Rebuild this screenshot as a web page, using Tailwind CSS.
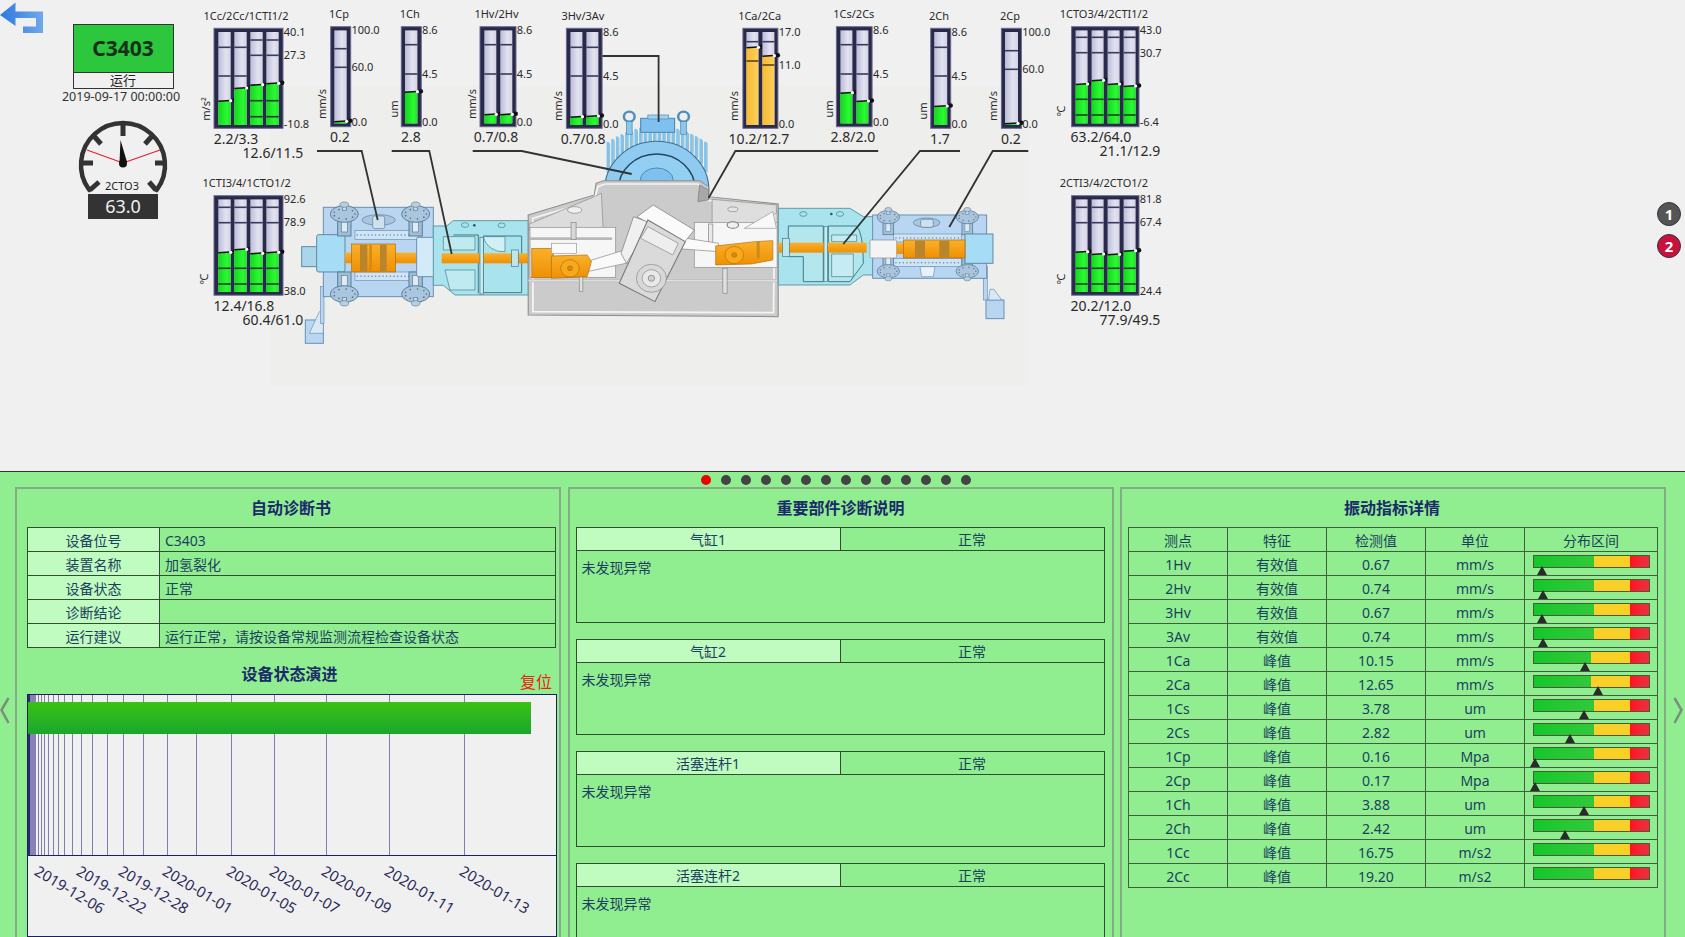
<!DOCTYPE html>
<html lang="zh-CN">
<head>
<meta charset="UTF-8" />
<title>C3403</title>
<script src="https://cdn.jsdelivr.net/npm/@tailwindcss/browser@4"></script>
</head>
<body class="w-[1685px] h-[937px] overflow-hidden flex flex-col bg-[#f0f0f0] text-[#1c3f5f] font-['Noto_Sans','Noto_Sans_CJK_SC',sans-serif]">

  <!-- top: machine overview -->
  <section class="relative h-[471px] shrink-0">
    <svg id="canvas" class="absolute left-0 top-0" width="1685" height="471"></svg>

    <svg class="absolute left-0 top-0" width="44" height="36" viewBox="0 0 44 36">
      <defs><linearGradient id="backblue" x1="0" x2="1"><stop offset="0" stop-color="#2f78dc"/><stop offset="1" stop-color="#6fa8ec"/></linearGradient></defs>
      <path d="M0 15 L15.5 2.5 V11.5 H43 V33 H23 V26.5 H36 V18 H15.5 V26 Z" fill="url(#backblue)"/>
    </svg>

    <!-- status column -->
    <div class="relative ml-[62px] pt-[24px] w-[122px] flex flex-col items-center">
      <div class="w-[101px] h-[65px] border border-[#333] flex flex-col text-[#222]">
        <div class="h-[48px] bg-[#2cc73c] border-b border-[#333] flex items-center justify-center text-[21px] font-bold text-[#16301c]">C3403</div>
        <div class="flex-1 flex items-center justify-center text-[13px] leading-none">运行</div>
      </div>
      <div class="-ml-[4px] text-[12.5px] leading-[16px] whitespace-nowrap text-[#333]">2019-09-17 00:00:00</div>
      <svg class="mt-[13px]" width="100" height="82" viewBox="73 118 100 82">
        <path d="M89.3 190 A42 42 0 1 1 156.7 190" fill="none" stroke="#333" stroke-width="4.5" stroke-linecap="round"/>
        <g stroke="#333" stroke-width="5">
          <line x1="123" y1="125" x2="123" y2="136"/>
          <line x1="93" y1="135" x2="101" y2="144"/>
          <line x1="153" y1="135" x2="145" y2="144"/>
          <line x1="81" y1="163" x2="93" y2="163"/>
          <line x1="155" y1="163" x2="165" y2="163"/>
          <line x1="90" y1="190" x2="99" y2="182"/>
          <line x1="156" y1="190" x2="149" y2="182"/>
        </g>
        <line x1="123" y1="163" x2="87" y2="150" stroke="#e02030" stroke-width="1.2"/>
        <line x1="123" y1="163" x2="160" y2="150" stroke="#e02030" stroke-width="1.2"/>
        <path d="M120.5 140 L127 162 L119.5 163 Z" fill="#111"/>
        <circle cx="123" cy="163.5" r="4" fill="#111"/>
        <text x="122" y="185" text-anchor="middle" dominant-baseline="central" font-size="11" fill="#222">2CTO3</text>
      </svg>
      <div class="w-[70px] h-[25px] -mt-[6px] bg-[#333] text-[#f0f0f0] text-[18px] leading-[25px] text-center">63.0</div>
    </div>

    <div class="absolute left-[1657px] top-[202px] flex flex-col gap-[8px] text-white text-[15px] font-bold">
      <div class="w-[24px] h-[24px] rounded-full bg-[#555] border border-[#334] flex items-center justify-center">1</div>
      <div class="w-[24px] h-[24px] rounded-full bg-[#c8123c] border border-[#334] flex items-center justify-center">2</div>
    </div>
  </section>

  <!-- bottom: diagnosis panels -->
  <section class="relative flex-1 min-h-0 bg-[#90ee90] border-t border-[#333] overflow-hidden">
    <div class="h-[15px] ml-[700.5px] flex items-center gap-[10px]">
      <span class="w-[10px] h-[10px] rounded-full bg-[#f00000]"></span>
      <span class="w-[10px] h-[10px] rounded-full bg-[#444]"></span>
      <span class="w-[10px] h-[10px] rounded-full bg-[#444]"></span>
      <span class="w-[10px] h-[10px] rounded-full bg-[#444]"></span>
      <span class="w-[10px] h-[10px] rounded-full bg-[#444]"></span>
      <span class="w-[10px] h-[10px] rounded-full bg-[#444]"></span>
      <span class="w-[10px] h-[10px] rounded-full bg-[#444]"></span>
      <span class="w-[10px] h-[10px] rounded-full bg-[#444]"></span>
      <span class="w-[10px] h-[10px] rounded-full bg-[#444]"></span>
      <span class="w-[10px] h-[10px] rounded-full bg-[#444]"></span>
      <span class="w-[10px] h-[10px] rounded-full bg-[#444]"></span>
      <span class="w-[10px] h-[10px] rounded-full bg-[#444]"></span>
      <span class="w-[10px] h-[10px] rounded-full bg-[#444]"></span>
      <span class="w-[10px] h-[10px] rounded-full bg-[#444]"></span>
    </div>

    <div class="flex gap-[6.5px] pl-[15px]">
      <!-- panel 1 -->
      <div class="w-[546px] h-[480px] shrink-0 border-2 border-[#84ad84] pl-[10px]">
        <h2 class="h-[38px] flex items-center justify-center text-[16px] font-bold text-[#1a2a6a] pr-[4px]">自动诊断书</h2>
        <table class="w-[529px] table-fixed border-collapse text-[14px]">
          <colgroup><col class="w-[132px]"/><col/></colgroup>
          <tbody>
            <tr class="h-6"><td class="border border-[#2f4f2f] bg-[#c0fbc0] text-center p-0 pt-[2px]">设备位号</td><td class="border border-[#2f4f2f] p-0 pt-[2px] pl-[5px]">C3403</td></tr>
            <tr class="h-6"><td class="border border-[#2f4f2f] bg-[#c0fbc0] text-center p-0 pt-[2px]">装置名称</td><td class="border border-[#2f4f2f] p-0 pt-[2px] pl-[5px]">加氢裂化</td></tr>
            <tr class="h-6"><td class="border border-[#2f4f2f] bg-[#c0fbc0] text-center p-0 pt-[2px]">设备状态</td><td class="border border-[#2f4f2f] p-0 pt-[2px] pl-[5px]">正常</td></tr>
            <tr class="h-6"><td class="border border-[#2f4f2f] bg-[#c0fbc0] text-center p-0 pt-[2px]">诊断结论</td><td class="border border-[#2f4f2f] p-0 pt-[2px] pl-[5px]"></td></tr>
            <tr class="h-6"><td class="border border-[#2f4f2f] bg-[#c0fbc0] text-center p-0 pt-[2px]">运行建议</td><td class="border border-[#2f4f2f] p-0 pt-[2px] pl-[5px]">运行正常，请按设备常规监测流程检查设备状态</td></tr>
          </tbody>
        </table>
        <div class="relative h-[46px] w-[529px] flex items-center justify-center pt-[6px] text-[16px] font-bold text-[#1a2a6a] pr-[4px]">
          设备状态演进
          <span class="absolute right-[4px] bottom-[0px] text-[16px] font-normal text-[#f02010]">复位</span>
        </div>
        <div id="chart" class="relative w-[530px] h-[243px] border border-[#1a2060] bg-[#f0f0f0] overflow-hidden text-[#2a2a5a] text-[15px]">
          <div class="absolute left-0 top-0 w-[8px] h-[160px] bg-[#8a80b8] border-l-2 border-[#2a2a70]"></div>
          <div id="chart-lines"></div>
          <div class="absolute left-0 top-[7px] w-[503px] h-[32px] bg-gradient-to-b from-[#3ac20e] to-[#19a72c]"></div>
          <div class="absolute left-0 right-0 top-[160px] h-px bg-[#1a2060]"></div>
          <div id="chart-labels"></div>
        </div>
      </div>

      <!-- panel 2 -->
      <div id="parts" class="w-[546px] h-[480px] shrink-0 border-2 border-[#84ad84] pl-[6px]">
        <h2 class="h-[38px] flex items-center justify-center text-[16px] font-bold text-[#1a2a6a] pr-[6px]">重要部件诊断说明</h2>
      </div>

      <!-- panel 3 -->
      <div class="w-[546px] h-[480px] shrink-0 border-2 border-[#84ad84] pl-[6px]">
        <h2 class="h-[38px] flex items-center justify-center text-[16px] font-bold text-[#1a2a6a] pr-[8px]">振动指标详情</h2>
        <table class="w-[530px] table-fixed border-collapse text-[14px] text-center">
          <colgroup><col class="w-[99px]"/><col class="w-[99px]"/><col class="w-[99px]"/><col class="w-[99px]"/><col/></colgroup>
          <thead>
            <tr class="h-6 font-normal">
              <td class="border border-[#3f5f3f] p-0 pt-[2px]">测点</td>
              <td class="border border-[#3f5f3f] p-0 pt-[2px]">特征</td>
              <td class="border border-[#3f5f3f] p-0 pt-[2px]">检测值</td>
              <td class="border border-[#3f5f3f] p-0 pt-[2px]">单位</td>
              <td class="border border-[#3f5f3f] p-0 pt-[2px]">分布区间</td>
            </tr>
          </thead>
          <tbody id="vib"></tbody>
        </table>
      </div>
    </div>

    <svg class="absolute left-0 top-[225px]" width="10" height="28"><polyline points="8.5,1 1.5,13 8.5,26" fill="none" stroke="#7a8f7a" stroke-width="2.5"/></svg>
    <svg class="absolute left-[1673px] top-[225px]" width="10" height="28"><polyline points="1.5,1 8.5,13 1.5,26" fill="none" stroke="#7a8f7a" stroke-width="2.5"/></svg>
  </section>

<script>
  // bottom panels
  const parts = ['气缸1', '气缸2', '活塞连杆1', '活塞连杆2'];
  document.getElementById('parts').insertAdjacentHTML('beforeend', parts.map(name => `
    <div class="w-[529px] h-[96px] mb-[16px] border border-[#2f4f2f] text-[14px]">
      <div class="h-[23px] flex border-b border-[#2f4f2f] text-center leading-[24px]">
        <div class="w-[264px] bg-[#c0fbc0] border-r border-[#2f4f2f]">${name}</div>
        <div class="flex-1">正常</div>
      </div>
      <div class="pl-[5px] pt-[7px] leading-[20px]">未发现异常</div>
    </div>`).join(''));

  const vib = [
    ['1Hv', '有效值', '0.67', 'mm/s', 52, 9.2],
    ['2Hv', '有效值', '0.74', 'mm/s', 52, 9.9],
    ['3Hv', '有效值', '0.67', 'mm/s', 52, 8.8],
    ['3Av', '有效值', '0.74', 'mm/s', 52, 9.9],
    ['1Ca', '峰值', '10.15', 'mm/s', 49.5, 52],
    ['2Ca', '峰值', '12.65', 'mm/s', 49.5, 64.9],
    ['1Cs', '峰值', '3.78', 'um', 52, 50.6],
    ['2Cs', '峰值', '2.82', 'um', 52, 37.4],
    ['1Cp', '峰值', '0.16', 'Mpa', 52, 1.8],
    ['2Cp', '峰值', '0.17', 'Mpa', 52, 1.8],
    ['1Ch', '峰值', '3.88', 'um', 52, 51],
    ['2Ch', '峰值', '2.42', 'um', 52, 32.3],
    ['1Cc', '峰值', '16.75', 'm/s2', 52, null],
    ['2Cc', '峰值', '19.20', 'm/s2', 52, null],
  ];
  document.getElementById('vib').innerHTML = vib.map(r => `
    <tr class="h-6">
      <td class="border border-[#3f5f3f] p-0 pt-[2px]">${r[0]}</td>
      <td class="border border-[#3f5f3f] p-0 pt-[2px]">${r[1]}</td>
      <td class="border border-[#3f5f3f] p-0 pt-[2px]">${r[2]}</td>
      <td class="border border-[#3f5f3f] p-0 pt-[2px]">${r[3]}</td>
      <td class="border border-[#3f5f3f] p-0">
        <div class="relative w-[117px] h-[23px] ml-[8px]">
          <div class="absolute left-0 top-[3px] w-[117px] h-[13px] border border-[#4a5a3a] flex">
            <div class="bg-gradient-to-r from-[#12c82a] to-[#30c83a]" style="width:${r[4]}%"></div>
            <div class="flex-1 bg-[#f8d028]"></div>
            <div class="w-[19px] bg-gradient-to-r from-[#ff1020] to-[#e83040]"></div>
          </div>
          ${r[5] === null ? '' : `<div class="absolute top-[14px] w-0 h-0 border-l-[5px] border-r-[5px] border-b-[9px] border-l-transparent border-r-transparent border-b-[#2a2a2a]" style="left:${r[5] - 5}px"></div>`}
        </div>
      </td>
    </tr>`).join('');

  // status history chart
  const lines = [10, 12.7, 15.6, 20, 25.1, 30.2, 36, 44, 53.1, 64, 78.5, 95.2, 115.2, 139.2, 168, 203.2, 246.2, 298.2, 361.1, 436.3];
  document.getElementById('chart-lines').innerHTML = lines.map(x =>
    `<div class="absolute top-0 w-px h-[160px] bg-[#7f7fae]" style="left:${x}px"></div>`).join('');
  const dates = [['2019-12-06', 12], ['2019-12-22', 54], ['2019-12-28', 96], ['2020-01-01', 140], ['2020-01-05', 204], ['2020-01-07', 247], ['2020-01-09', 299], ['2020-01-11', 362], ['2020-01-13', 437]];
  document.getElementById('chart-labels').innerHTML = dates.map(d =>
    `<span class="absolute top-[168px] leading-none whitespace-nowrap origin-top-left rotate-[31deg]" style="left:${d[1]}px">${d[0]}</span>`).join('');

  // machine drawing + gauges are drawn on one svg canvas
  const TXT = 'fill="#2a2a2a" dominant-baseline="central"';

  function valve(cx, cy, down, k = 1) {
    const s = down ? -1 : 1;
    let bolts = '';
    for (let a = 0; a < 360; a += 40) {
      const r = a * Math.PI / 180;
      bolts += `<circle cx="${cx + Math.cos(r) * 32}" cy="${cy + 14 * s + Math.sin(r) * 15}" r="2.5" fill="#4f7088"/>`;
    }
    return `<g transform="translate(${cx} ${cy}) scale(${k}) translate(${-cx} ${-cy})">
      <rect x="${cx - 20}" y="${down ? cy - 80 : cy + 14}" width="40" height="66" fill="#9fbfd8" stroke="#5a7d98" stroke-width="3"/>
      <rect x="${cx - 9}" y="${down ? cy - 70 : cy + 30}" width="18" height="38" fill="#dfeaf3" stroke="#5a7d98" stroke-width="2"/>
      <ellipse cx="${cx}" cy="${cy + 14 * s}" rx="42" ry="25" fill="#a9c6de" stroke="#5a7d98" stroke-width="3"/>${bolts}
      <rect x="${cx - 6}" y="${down ? cy - 4 : cy - 14}" width="12" height="18" fill="#c9d9e6" stroke="#5a7d98" stroke-width="2"/>
      <ellipse cx="${cx}" cy="${down ? cy + 14 : cy - 14}" rx="13" ry="8" fill="#b9cede" stroke="#5a7d98" stroke-width="2"/></g>`;
  }

  function dots(x1, x2, y) {
    let o = '';
    for (let x = x1; x <= x2; x += 11) o += `<circle cx="${x}" cy="${y}" r="2.2" fill="#5f86a8"/>`;
    return o;
  }

  function fins() {
    let o = '';
    for (let x = 358; x <= 634; x += 13) {
      const d = (x - 495) / 140;
      const top = 378 + d * d * 50;
      const bottom = 570 - Math.sqrt(Math.max(0, 146 * 146 - (x - 495) * (x - 495)));
      o += `<line x1="${x}" y1="${top}" x2="${x}" y2="${Math.max(bottom, top + 10)}" stroke="#7cc4f0" stroke-width="7"/>
            <line x1="${x + 5}" y1="${top + 4}" x2="${x + 5}" y2="${Math.max(bottom, top + 10)}" stroke="#4a88b0" stroke-width="1.5"/>`;
    }
    return o;
  }

  const machine = `
    <defs>
      <linearGradient id="track" x1="0" x2="1"><stop offset="0" stop-color="#bcbcd8"/><stop offset=".6" stop-color="#e2e2f0"/><stop offset="1" stop-color="#d4d4e6"/></linearGradient>
      <linearGradient id="fillg" x1="0" x2="1"><stop offset="0" stop-color="#12d81c"/><stop offset=".7" stop-color="#2cfa34"/><stop offset="1" stop-color="#20e028"/></linearGradient>
      <linearGradient id="filly" x1="0" x2="1"><stop offset="0" stop-color="#f6ba30"/><stop offset="1" stop-color="#fcd060"/></linearGradient>
      <linearGradient id="orange" x1="0" x2="0" y2="1"><stop offset="0" stop-color="#fbb028"/><stop offset="1" stop-color="#ee9006"/></linearGradient>
    </defs>
    <rect x="270" y="86" width="758" height="300" fill="#eeeeec"/>

    <!-- motor -->
    <g transform="translate(480 0) scale(.3571 .3333)">
      ${fins()}
      <circle cx="495" cy="570" r="146" fill="#8fcbf0" stroke="#3a6f90" stroke-width="3"/>
      <circle cx="495" cy="570" r="108" fill="#93cff2" stroke="#22465f" stroke-width="4"/>
      <ellipse cx="495" cy="540" rx="46" ry="36" fill="#7ec0ee" stroke="#3a6f90" stroke-width="2"/>
      <rect x="450" y="355" width="95" height="42" fill="#7fc0ee" stroke="#4a88b0" stroke-width="3"/>
      <rect x="470" y="345" width="58" height="12" fill="#9fd2f2" stroke="#4a88b0" stroke-width="2"/>
      <circle cx="418" cy="350" r="15" fill="none" stroke="#4a8fbe" stroke-width="7"/>
      <circle cx="570" cy="350" r="15" fill="none" stroke="#4a8fbe" stroke-width="7"/>
      <rect x="410" y="365" width="16" height="38" fill="#8cc8ee" stroke="#4a88b0" stroke-width="2"/>
      <rect x="562" y="365" width="16" height="38" fill="#8cc8ee" stroke="#4a88b0" stroke-width="2"/>
    </g>

    <!-- left cylinder and distance piece -->
    <g transform="translate(280 100) scale(.3333)">
      <rect x="76" y="660" width="54" height="70" fill="#b8d6f2" stroke="#6b8fb0" stroke-width="3"/>
      <polygon points="88,700 118,635 130,635 130,700" fill="#d8e8f6" stroke="#6b8fb0" stroke-width="2"/>
      <rect x="122" y="560" width="10" height="110" fill="#b8d6f2" stroke="#6b8fb0" stroke-width="2"/>
      <rect x="130" y="322" width="330" height="268" fill="#b8d6f2" stroke="#6b8fb0" stroke-width="3"/>
      <rect x="225" y="392" width="190" height="26" fill="#cfe4f7" stroke="#6b8fb0" stroke-width="2"/>
      ${dots(232, 410, 405)}
      <rect x="225" y="516" width="190" height="26" fill="#cfe4f7" stroke="#6b8fb0" stroke-width="2"/>
      ${dots(232, 410, 529)}
      <rect x="65" y="440" width="48" height="60" fill="#a9d6ea" stroke="#5f8aa2" stroke-width="3"/>
      <rect x="110" y="404" width="85" height="112" rx="6" fill="#a6dcf5" stroke="#5f8aa2" stroke-width="3"/>
      <ellipse cx="296" cy="360" rx="50" ry="16" fill="#a9c6de" stroke="#5a7d98" stroke-width="2"/>
      <rect x="278" y="348" width="36" height="38" rx="6" fill="#cfe0ee" stroke="#5a7d98" stroke-width="2"/>
      ${valve(193, 328, false)}${valve(407, 328, false)}${valve(193, 596, true)}${valve(407, 596, true)}
      <rect x="195" y="458" width="215" height="32" fill="url(#orange)"/>
      <rect x="215" y="432" width="132" height="84" fill="url(#orange)" stroke="#a86c10" stroke-width="2"/>
      <rect x="240" y="434" width="22" height="80" fill="#b8842c"/>
      <rect x="268" y="434" width="8" height="80" fill="#d88a10"/>
      <rect x="300" y="434" width="20" height="80" fill="#b8842c"/>
      <rect x="410" y="412" width="52" height="118" rx="5" fill="#d3eaf8" stroke="#6b8fb0" stroke-width="3"/>
      <path d="M460 378 H500 L520 362 H745 V585 H525 L490 556 H460 Z" fill="#a8e3ee" stroke="#5f9aa6" stroke-width="3"/>
      <path d="M520 405 H595 V580 M610 408 H725 V578 H610 V408" fill="#a8e3ee" stroke="#3f7a86" stroke-width="3"/>
      <path d="M490 410 H585 V450 H490 Z" fill="#bfeaf0" stroke="#3f7a86" stroke-width="2"/>
      <path d="M495 510 H585 V570 H510 Z" fill="#bfeaf0" stroke="#3f7a86" stroke-width="2"/>
      <ellipse cx="555" cy="375" rx="11" ry="7" fill="none" stroke="#3f7a86" stroke-width="2"/>
      <ellipse cx="665" cy="376" rx="11" ry="7" fill="none" stroke="#3f7a86" stroke-width="2"/>
      <circle cx="583" cy="376" r="4" fill="#2a5a66"/>
      <path d="M610 410 A60 60 0 0 0 675 455 V410 Z" fill="#d0f0f4" stroke="#3f7a86" stroke-width="2"/>
      <rect x="485" y="460" width="265" height="30" fill="url(#orange)"/>
      <rect x="600" y="412" width="10" height="170" fill="#c8ecf0" stroke="#3f7a86" stroke-width="2"/>
      <rect x="695" y="450" width="20" height="50" fill="#bfe6ec" stroke="#3f7a86" stroke-width="2"/>
    </g>

    <!-- crank case -->
    <g transform="translate(480 0) scale(.3571 .3333)">
      <polygon points="135,645 320,585 325,550 345,542 615,542 640,560 640,590 835,612 835,950 135,945" fill="#cbcbcb" stroke="#8c8c8c" stroke-width="3"/>
      <polygon points="148,655 320,600 330,560 350,552 610,552 628,570 628,600 825,622 822,938 148,935" fill="none" stroke="#f4f4f4" stroke-width="5"/>
      <polygon points="138,672 320,590 340,580 345,690 138,690" fill="#dcdcdc" stroke="#8c8c8c" stroke-width="2"/>
      <polygon points="650,598 830,615 830,640 740,680 650,680" fill="#dedede" stroke="#8c8c8c" stroke-width="2"/>
      <polygon points="610,605 640,600 640,570 615,555" fill="#a8a8a8" stroke="#777" stroke-width="2"/>
      <ellipse cx="265" cy="630" rx="20" ry="10" fill="#f0f0f0" stroke="#888" stroke-width="2"/>
      <ellipse cx="708" cy="628" rx="14" ry="7" fill="#e4e4e4" stroke="#888" stroke-width="2"/>
      <rect x="140" y="682" width="240" height="150" fill="#f6f6f6" stroke="#8c8c8c" stroke-width="2"/>
      <rect x="140" y="712" width="230" height="8" fill="#b8b8b8"/>
      <rect x="255" y="668" width="14" height="50" fill="#d8d8d8" stroke="#888" stroke-width="2"/>
      <rect x="600" y="668" width="232" height="134" fill="#f6f6f6" stroke="#8c8c8c" stroke-width="2"/>
      <polygon points="820,635 740,685 830,685" fill="#f8f8f8" stroke="#999" stroke-width="2"/>
      <rect x="640" y="672" width="12" height="70" fill="#e8e8e8" stroke="#888" stroke-width="2"/>
      <ellipse cx="708" cy="675" rx="16" ry="10" fill="#f0f0f0" stroke="#777" stroke-width="3"/>
      <rect x="135" y="838" width="698" height="8" fill="#dedede" stroke="#9a9a9a" stroke-width="1"/>
      <rect x="278" y="830" width="10" height="45" fill="#e0e0e0" stroke="#888" stroke-width="2"/>
      <rect x="680" y="805" width="12" height="75" fill="#e0e0e0" stroke="#888" stroke-width="2"/>
      <polygon points="298,785 420,745 430,785 300,815" fill="#fafafa" stroke="#888" stroke-width="2"/>
      <polygon points="560,712 668,730 668,755 540,745" fill="#fafafa" stroke="#888" stroke-width="2"/>
      <polygon points="485,615 600,690 570,730 440,650" fill="#fafafa" stroke="#777" stroke-width="2"/>
      <polygon points="430,650 480,670 410,790 395,760" fill="#f0f0f0" stroke="#777" stroke-width="2"/>
      <polygon points="470,660 575,725 490,905 390,850" fill="#dadada" stroke="#777" stroke-width="3"/>
      <polygon points="470,680 555,730 540,765 450,715" fill="#eeeeee" stroke="#888" stroke-width="2"/>
      <circle cx="480" cy="835" r="42" fill="#d8d8d8" stroke="#888" stroke-width="2"/>
      <circle cx="480" cy="835" r="26" fill="#e8e8e8" stroke="#888" stroke-width="2"/>
      <circle cx="480" cy="835" r="9" fill="#cfcfcf" stroke="#777" stroke-width="2"/>
      <rect x="145" y="745" width="60" height="88" fill="url(#orange)" stroke="#b07010" stroke-width="2"/>
      <polygon points="200,768 300,765 312,785 300,830 200,835" fill="url(#orange)" stroke="#b07010" stroke-width="2"/>
      <circle cx="252" cy="805" r="26" fill="#f8a818" stroke="#b07010" stroke-width="2"/>
      <circle cx="252" cy="805" r="7" fill="#d88a10" stroke="#b07010" stroke-width="2"/>
      <rect x="200" y="730" width="70" height="30" fill="#fafafa" stroke="#999" stroke-width="2"/>
      <polygon points="660,738 770,725 820,722 820,780 760,792 660,795" fill="url(#orange)" stroke="#b07010" stroke-width="2"/>
      <circle cx="712" cy="765" r="26" fill="#f8a818" stroke="#b07010" stroke-width="2"/>
      <circle cx="712" cy="765" r="7" fill="#d88a10" stroke="#b07010" stroke-width="2"/>
      <rect x="775" y="725" width="8" height="50" fill="#c88a20"/>
    </g>

    <!-- right distance piece and cylinder -->
    <g transform="translate(700 100) scale(.3333)">
      <path d="M235 325 H450 L490 350 H520 V525 H490 L450 555 H235 Z" fill="#a8e3ee" stroke="#5f9aa6" stroke-width="3"/>
      <path d="M265 378 H370 V545 H310 V470 H265 Z M385 378 H470 Q490 400 490 490 L450 545 H385 Z" fill="#b4e6ee" stroke="#3f7a86" stroke-width="3"/>
      <path d="M395 405 H470 V425 H395 Z M395 462 H460 V530 H395 Z" fill="#c4ecf2" stroke="#3f7a86" stroke-width="2"/>
      <ellipse cx="310" cy="342" rx="11" ry="7" fill="none" stroke="#3f7a86" stroke-width="2"/>
      <ellipse cx="420" cy="342" rx="11" ry="7" fill="none" stroke="#3f7a86" stroke-width="2"/>
      <circle cx="394" cy="342" r="4" fill="#2a5a66"/>
      <rect x="858" y="600" width="54" height="56" fill="#b8d6f2" stroke="#6b8fb0" stroke-width="3"/>
      <polygon points="866,600 870,568 882,568 905,600" fill="#d8e8f6" stroke="#6b8fb0" stroke-width="2"/>
      <rect x="850" y="500" width="12" height="100" fill="#b8d6f2" stroke="#6b8fb0" stroke-width="2"/>
      <rect x="518" y="345" width="342" height="190" fill="#b8d6f2" stroke="#6b8fb0" stroke-width="3"/>
      <rect x="580" y="402" width="205" height="24" fill="#cfe4f7" stroke="#6b8fb0" stroke-width="2"/>
      ${dots(588, 782, 414)}
      <rect x="580" y="476" width="205" height="24" fill="#cfe4f7" stroke="#6b8fb0" stroke-width="2"/>
      ${dots(588, 782, 488)}
      <ellipse cx="680" cy="368" rx="40" ry="14" fill="#a9c6de" stroke="#5a7d98" stroke-width="2"/>
      <rect x="662" y="358" width="38" height="24" rx="6" fill="#cfe0ee" stroke="#5a7d98" stroke-width="2"/>
      <polygon points="660,500 705,500 700,530 665,530" fill="#e8f2fa" stroke="#6b8fb0" stroke-width="2"/>
      ${valve(565, 340, false, .8)}${valve(802, 340, false, .8)}${valve(565, 525, true, .8)}${valve(802, 525, true, .8)}
      <rect x="795" y="402" width="84" height="88" fill="#a6dcf5" stroke="#5f8aa2" stroke-width="3"/>
      <rect x="235" y="428" width="265" height="30" fill="url(#orange)"/>
      <rect x="372" y="380" width="10" height="165" fill="#c8ecf0" stroke="#3f7a86" stroke-width="2"/>
      <rect x="248" y="415" width="20" height="55" fill="#bfe6ec" stroke="#3f7a86" stroke-width="2"/>
      <rect x="510" y="420" width="80" height="54" rx="4" fill="#f4f4f4" stroke="#8a8a8a" stroke-width="2"/>
      <rect x="590" y="430" width="205" height="32" fill="url(#orange)"/>
      <rect x="610" y="420" width="185" height="54" fill="url(#orange)" stroke="#a86c10" stroke-width="2"/>
      <rect x="645" y="422" width="30" height="50" fill="#b8842c"/>
      <rect x="718" y="422" width="30" height="50" fill="#b8842c"/>
    </g>

    <!-- leader lines -->
    <g fill="none" stroke="#333" stroke-width="1.8">
      <polyline points="317,151 361.7,151 377.7,220"/>
      <polyline points="391.7,151 429.3,151 451.7,254"/>
      <polyline points="472.7,151 521.7,151 631.7,174"/>
      <polyline points="602,56 658.6,56 658.6,122"/>
      <polyline points="878.2,151 735.4,151 708.6,198"/>
      <polyline points="960,151 920,151 843.3,244"/>
      <polyline points="1028.3,151 992.7,151 949.3,227"/>
    </g>`;

  // x, y, w, h of the frame; col1 = first column x; pitch/colW; ticks per column; top of fill per column
  const T1 = [47.3, 76], T1B = [40, 55.3, 100.7, 116.7];
  const gauges = [
    { label: '1Cc/2Cc/1CTI1/2', lx: 246, ly: 15, x: 214, y: 28.3, w: 69, h: 100, col: 218.3, pitch: 16, cw: 12.4,
      ticks: [T1, T1, T1B, T1B], tops: [100.7, 88, 84.7, 83.3], axis: [['40.1', 31], ['27.3', 54], ['-10.8', 123]],
      unit: 'm/s²', ux: 205.5, uy: 109, reads: [['2.2/3.3', 236, 138], ['12.6/11.5', 273, 152]] },
    { label: '1Cp', lx: 339, ly: 13, x: 330.7, y: 26.7, w: 20, h: 100, col: 334.3, pitch: 0, cw: 12.4,
      ticks: [[48.7, 67.3]], tops: [121.3], axis: [['100.0', 29], ['60.0', 66], ['0.0', 121]],
      unit: 'mm/s', ux: 321, uy: 104, reads: [['0.2', 340, 136]] },
    { label: '1Ch', lx: 409.7, ly: 13, x: 401.3, y: 26.7, w: 20, h: 100, col: 405, pitch: 0, cw: 12.4,
      ticks: [[44.7, 74]], tops: [91.7], axis: [['8.6', 29], ['4.5', 73], ['0.0', 121]],
      unit: 'um', ux: 393, uy: 109, reads: [['2.8', 411, 136]] },
    { label: '1Hv/2Hv', lx: 496.5, ly: 13, x: 480, y: 26.7, w: 36, h: 100, col: 484.3, pitch: 16, cw: 12,
      ticks: [[44.7, 74], [44.7, 74]], tops: [114.3, 114.3], axis: [['8.6', 29], ['4.5', 73], ['0.0', 121]],
      unit: 'mm/s', ux: 471, uy: 104, reads: [['0.7/0.8', 496, 136]] },
    { label: '3Hv/3Av', lx: 582.9, ly: 15, x: 566.4, y: 28.3, w: 35.7, h: 100, col: 570.4, pitch: 16, cw: 12,
      ticks: [T1, T1], tops: [116.7, 116], axis: [['8.6', 31], ['4.5', 75], ['0.0', 123]],
      unit: 'mm/s', ux: 557.9, uy: 106, reads: [['0.7/0.8', 583.2, 138]] },
    { label: '1Ca/2Ca', lx: 759.6, ly: 15, x: 742.9, y: 28.3, w: 35, h: 100, col: 746.4, pitch: 16, cw: 12, yellow: true,
      ticks: [[41.7, 61], [41.7, 65]], tops: [47.3, 55.7], axis: [['17.0', 31], ['11.0', 64], ['0.0', 123]],
      unit: 'mm/s', ux: 733.6, uy: 106, reads: [['10.2/12.7', 759, 138]] },
    { label: '1Cs/2Cs', lx: 853.8, ly: 13, x: 836.4, y: 26.7, w: 35.7, h: 100, col: 840.4, pitch: 16, cw: 12,
      ticks: [[44.7, 74], [44.7, 74]], tops: [92.7, 101], axis: [['8.6', 29], ['4.5', 73], ['0.0', 121]],
      unit: 'um', ux: 828.2, uy: 109, reads: [['2.8/2.0', 852.9, 136]] },
    { label: '2Ch', lx: 939, ly: 15, x: 930.7, y: 28.3, w: 20, h: 100, col: 934.2, pitch: 0, cw: 13,
      ticks: [T1], tops: [106], axis: [['8.6', 31], ['4.5', 75], ['0.0', 123]],
      unit: 'um', ux: 922, uy: 111, reads: [['1.7', 940, 138]] },
    { label: '2Cp', lx: 1010, ly: 15, x: 1001.4, y: 28.3, w: 20, h: 100, col: 1005, pitch: 0, cw: 13,
      ticks: [[50.7, 69.3]], tops: [123.3], axis: [['100.0', 31], ['60.0', 68], ['0.0', 123]],
      unit: 'mm/s', ux: 992.5, uy: 106, reads: [['0.2', 1011, 138]] },
    { label: '1CTO3/4/2CTI1/2', lx: 1103.8, ly: 13, x: 1071.6, y: 26.7, w: 67.4, h: 100, col: 1075.6, pitch: 16, cw: 12,
      ticks: [0, 1, 2, 3].map(() => [37.3, 52.7, 99.3, 115]), tops: [84, 80.3, 84, 86], axis: [['43.0', 29], ['30.7', 52], ['-6.4', 121]],
      unit: '℃', ux: 1060, uy: 111, reads: [['63.2/64.0', 1101, 136], ['21.1/12.9', 1130, 150]] },
    { label: '1CTI3/4/1CTO1/2', lx: 246.7, ly: 182, x: 214, y: 195.7, w: 69, h: 99.5, col: 218.3, pitch: 16, cw: 12.4,
      ticks: [0, 1, 2, 3].map(() => [207.3, 222.7, 268.3, 284]), tops: [252.3, 249.3, 253.3, 252.3], axis: [['92.6', 198], ['78.9', 221], ['38.0', 290]],
      unit: '℃', ux: 203, uy: 279, reads: [['12.4/16.8', 244, 305], ['60.4/61.0', 273, 319]] },
    { label: '2CTI3/4/2CTO1/2', lx: 1103.8, ly: 182, x: 1071.6, y: 195.7, w: 67.4, h: 99.5, col: 1075.6, pitch: 16, cw: 12,
      ticks: [0, 1, 2, 3].map(() => [207.3, 222.7, 268.3, 284]), tops: [251.7, 254, 254.3, 250.7], axis: [['81.8', 198], ['67.4', 221], ['24.4', 290]],
      unit: '℃', ux: 1060, uy: 279, reads: [['20.2/12.0', 1101, 305], ['77.9/49.5', 1130, 319]] },
  ];

  function gauge(g) {
    const inTop = g.y + 3.7, inBottom = g.y + g.h - 3.3;
    let o = `<rect x="${g.x}" y="${g.y}" width="${g.w}" height="${g.h}" fill="#29294a" stroke="#6a6a90" stroke-width="1"/>`;
    g.tops.forEach((top, i) => {
      const x = g.col + i * g.pitch;
      o += `<rect x="${x}" y="${inTop}" width="${g.cw}" height="${inBottom - inTop}" fill="url(#track)"/>
            <rect x="${x}" y="${top}" width="${g.cw}" height="${inBottom - top}" fill="url(#${g.yellow ? 'filly' : 'fillg'})"/>`;
      g.ticks[i].forEach(t => {
        o += `<line x1="${x}" x2="${x + g.cw}" y1="${t}" y2="${t}" stroke="${t > top && !g.yellow ? '#123c24' : (g.yellow && t > top ? '#5a4420' : '#3a3a5c')}" stroke-width="1.6"/>`;
      });
      o += `<line x1="${x}" x2="${x + g.cw + 3}" y1="${top + .5}" y2="${top - .5}" stroke="#111" stroke-width="1.6"/>
            <circle cx="${x + g.cw + 3.5}" cy="${top - .5}" r="2.2" fill="#111"/>
            <circle cx="${x + g.cw}" cy="${top}" r="1.6" fill="#fff"/>`;
    });
    o += `<text x="${g.lx}" y="${g.ly}" text-anchor="middle" font-size="11" ${TXT}>${g.label}</text>`;
    g.axis.forEach(a => { o += `<text x="${g.x + g.w + .8}" y="${a[1]}" font-size="11" ${TXT}>${a[0]}</text>`; });
    o += `<text transform="rotate(-90 ${g.ux} ${g.uy})" x="${g.ux}" y="${g.uy}" text-anchor="middle" font-size="11" ${TXT}>${g.unit}</text>`;
    g.reads.forEach(r => { o += `<text x="${r[1]}" y="${r[2]}" text-anchor="middle" font-size="14" ${TXT}>${r[0]}</text>`; });
    return o;
  }

  document.getElementById('canvas').innerHTML = machine + gauges.map(gauge).join('');
</script>
</body>
</html>
